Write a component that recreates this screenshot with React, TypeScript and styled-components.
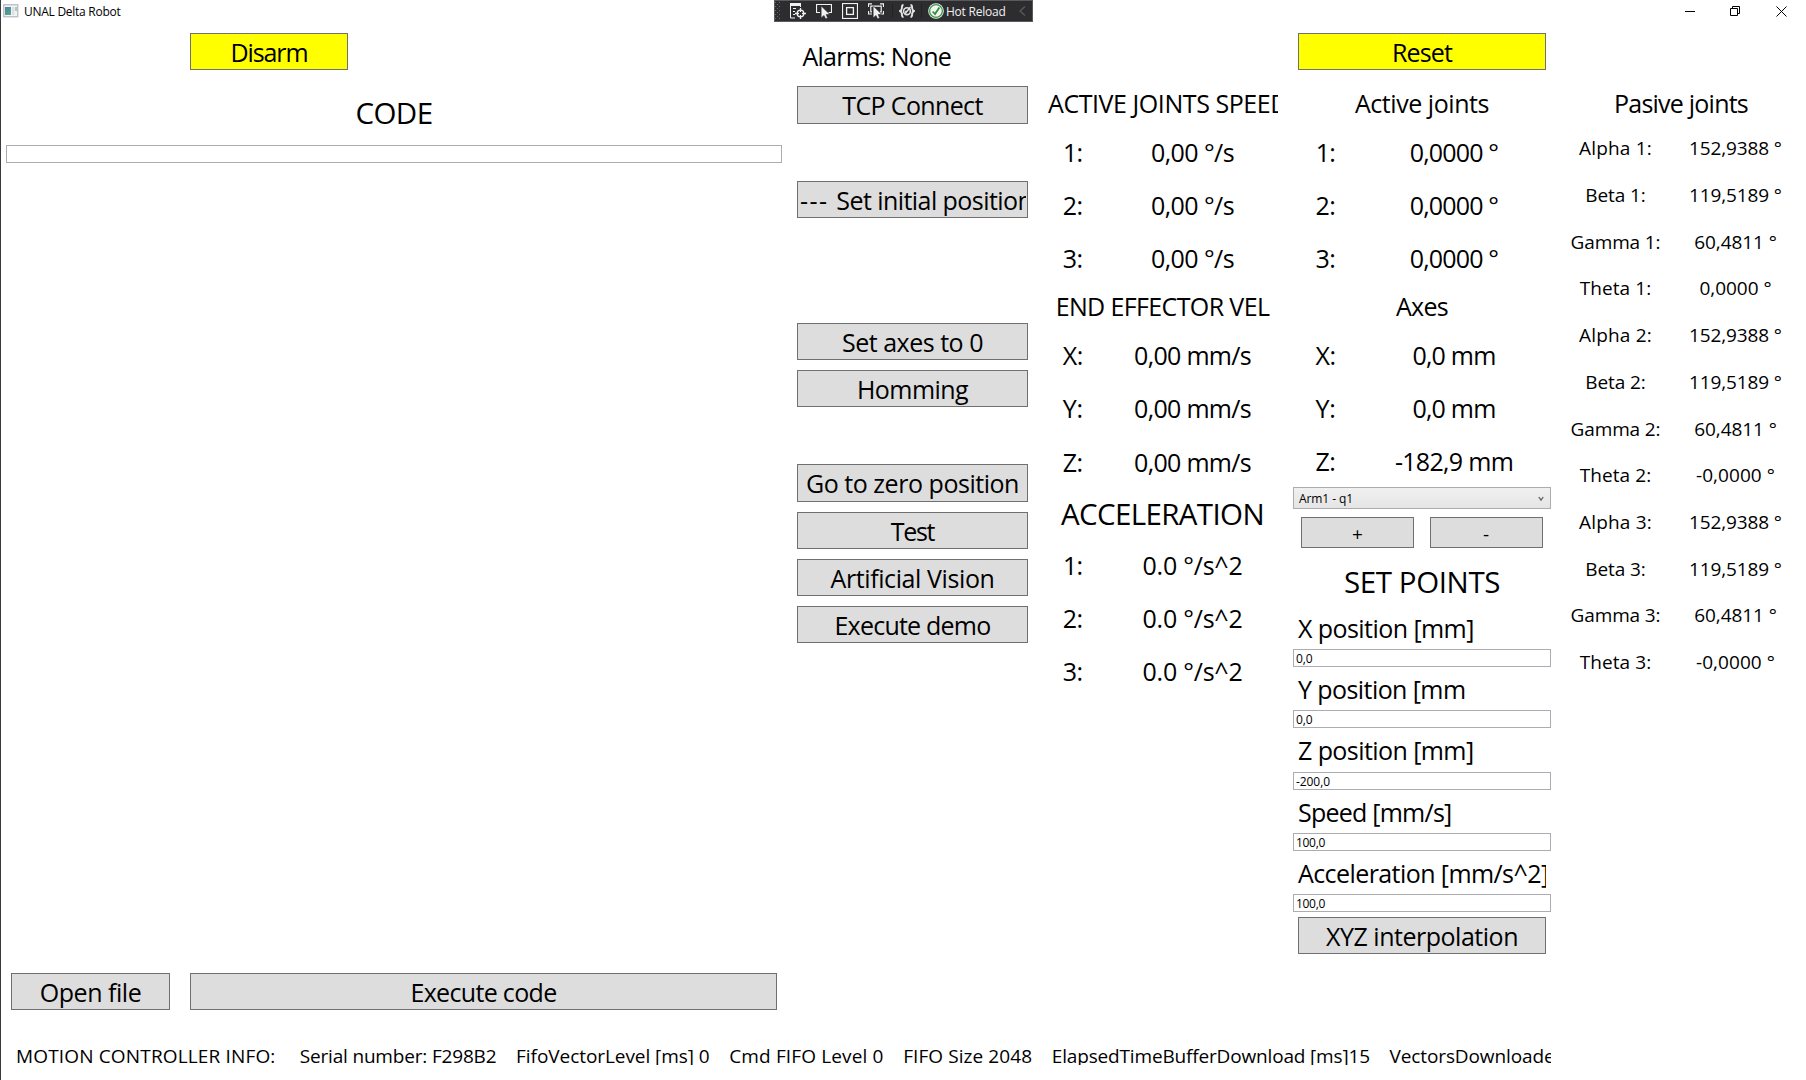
import React, { useLayoutEffect, useRef, useState } from 'react';
import styled, { createGlobalStyle } from 'styled-components';

const GlobalStyle = createGlobalStyle`
  * { box-sizing: border-box; }
  html, body { margin: 0; padding: 0; overflow: hidden; background: #fff; }
  body {
    font-family: "Open Sans", "Noto Sans", sans-serif;
    font-size: 25px;
    color: #000;
  }
`;

/* ---------- text fitted to a given width by tracking ---------- */

const FitSpan = styled.span`
  display: block;
  flex: none;
  white-space: pre;
  font-kerning: none;
  font-variant-ligatures: none;
`;

function Fit({ text, w }: { text: string; w: number }) {
  const ref = useRef<HTMLSpanElement>(null);
  const [tracking, setTracking] = useState(0);
  useLayoutEffect(() => {
    const el = ref.current;
    if (!el) return;
    el.style.letterSpacing = '0px';
    const range = document.createRange();
    range.selectNodeContents(el);
    const natural = range.getBoundingClientRect().width;
    const next = (w + 2 - natural) / text.length;
    el.style.letterSpacing = `${next}px`;
    setTracking(next);
  }, [text, w]);
  return (
    <FitSpan ref={ref} style={{ letterSpacing: `${tracking}px` }}>
      {text}
    </FitSpan>
  );
}

/* ---------- window frame ---------- */

const Window = styled.div`
  position: relative;
  display: flex;
  flex-direction: column;
  width: 1806px;
  height: 1080px;
  border-left: 1px solid #3a3a3c;
  background: #fff;
  overflow: hidden;
`;

const TitleBar = styled.header`
  display: flex;
  align-items: center;
  height: 22px;
  padding: 0 19px 0 2px;
  font-size: 12px;
  line-height: 20px;
`;

const TitleText = styled.div`
  flex: 1;
  padding: 2px 0 0 5px;
`;

const WindowButtons = styled.div`
  display: flex;
  gap: 35px;
  svg { display: block; width: 11px; height: 11px; }
`;

const DebugToolbar = styled.div`
  position: absolute;
  top: 0;
  left: 773px;
  width: 259px;
  height: 22px;
  display: flex;
  align-items: center;
  background: #2d2d30;
  border: 1px solid #5a5a5e;
  color: #f1f1f1;
  font-size: 12px;
  line-height: 18px;
  svg { display: block; flex: none; }
`;

const ToolIcons = styled.div`
  display: flex;
  gap: 10px;
  margin-left: 9px;
`;

const ToolSeparator = styled.i<{ $before: number; $after: number }>`
  width: 1px;
  height: 14px;
  margin: 0 ${p => p.$after}px 0 ${p => p.$before}px;
  background: #222224;
`;

const ToolText = styled.div`
  width: 75px;
  padding: 2px 0 0 2px;
`;

/* ---------- body columns ---------- */

const Body = styled.main`
  display: grid;
  grid-template-columns: 791px 241px 259px 259px 255px;
  height: 993px;
`;

const Column = styled.section`
  display: flex;
  flex-direction: column;
  min-width: 0;
`;

const CodeColumn = styled(Column)`
  padding: 0 10px 0 5px;
`;

const ButtonColumn = styled(Column)`
  padding: 0 5px;
`;

const TopSlot = styled.div<{ $left: number; $right: number }>`
  height: 58.5px;
  padding: 11px ${p => p.$right}px 0 ${p => p.$left}px;
`;

const Button = styled.button<{ $yellow?: boolean; $h?: number; $size?: number; $pt?: number }>`
  display: flex;
  align-items: center;
  justify-content: center;
  width: 100%;
  height: ${p => p.$h ?? 37.25}px;
  margin: 0;
  padding: ${p => p.$pt ?? 2}px 1px 0;
  border: 1px solid #707070;
  border-radius: 0;
  background: ${p => (p.$yellow ? '#ffff00' : '#dddddd')};
  color: #000;
  font-family: inherit;
  font-size: ${p => p.$size ?? 25}px;
  line-height: 33px;
  overflow: hidden;
`;

const ButtonClip = styled.span`
  display: flex;
  width: 100%;
  padding-left: 1px;
  overflow: hidden;
`;

const Heading = styled.h2<{ $h: number; $size?: number; $pt?: number; $shift?: number }>`
  display: flex;
  align-items: center;
  justify-content: center;
  height: ${p => p.$h}px;
  margin: 0;
  padding-top: ${p => p.$pt ?? 0}px;
  padding-left: ${p => p.$shift ?? 0}px;
  font-size: ${p => p.$size ?? 25}px;
  font-weight: 400;
  line-height: 1.36;
`;

const ClippedHeading = styled(Heading)`
  justify-content: flex-start;
  margin: 0 14px 0 12px;
  padding-left: 3px;
  overflow: hidden;
`;

const TextBox = styled.div`
  flex: none;
  height: 18px;
  padding: 1px 0 0 2px;
  border: 1px solid #abadb3;
  font-size: 12px;
  line-height: 16px;
`;

const Spacer = styled.div`
  flex: 1;
`;

const FileActions = styled.div`
  display: grid;
  grid-template-columns: 159px 587px;
  column-gap: 20px;
  padding: 0 0 5px 5px;
`;

const Alarms = styled.div`
  display: flex;
  align-items: center;
  height: 59.3px;
  padding: 8px 0 0 5.5px;
`;

const CommandSlot = styled.div`
  height: 47.25px;
  padding: 5px 0;
`;

const Row = styled.div<{ $h: number; $cols: string; $size?: number; $pt?: number }>`
  display: grid;
  grid-template-columns: ${p => p.$cols};
  align-items: center;
  justify-items: center;
  height: ${p => p.$h}px;
  padding-top: ${p => p.$pt ?? 0}px;
  font-size: ${p => p.$size ?? 25}px;
  line-height: 1.36;
`;

const Combo = styled.div`
  display: flex;
  align-items: center;
  justify-content: space-between;
  height: 22px;
  margin-left: 1px;
  padding: 1px 6px 0 5px;
  border: 1px solid #acacac;
  background: linear-gradient(#f0f0f0, #e5e5e5);
  font-size: 12px;
  line-height: 19px;
`;

const JogButtons = styled.div`
  display: grid;
  grid-template-columns: 113px 113px;
  column-gap: 16px;
  padding: 8px 0 0 9px;
`;

const Field = styled.div`
  height: 61.25px;
  padding-left: 1px;
`;

const FieldLabel = styled.div`
  display: flex;
  align-items: center;
  height: 43.25px;
  margin: 0 5px 0 4px;
  padding: 1px 0 0 1px;
  overflow: hidden;
`;

const Submit = styled.div`
  padding: 5px 5px 0 6px;
`;

const Footer = styled.footer`
  display: flex;
  align-items: center;
  gap: 19.7px;
  width: 1550px;
  height: 50px;
  padding: 32px 0 0 15px;
  font-size: 19px;
  line-height: 25px;
  overflow: hidden;
`;

const FooterLead = styled.div`
  margin-right: 4.5px;
`;

/* ---------- data ---------- */

type Command = { parts: [string, number][]; clip?: boolean } | null;

const commands: Command[] = [
  { parts: [['TCP Connect', 138.5]] },
  null,
  { parts: [['--- ', 34.3], ['Set initial position', 194]], clip: true },
  null,
  null,
  { parts: [['Set axes to 0', 139]] },
  { parts: [['Homming', 109]] },
  null,
  { parts: [['Go to zero position', 211]] },
  { parts: [['Test', 41.5]] },
  { parts: [['Artificial Vision', 162]] },
  { parts: [['Execute demo', 154]] },
];

const fields = [
  { label: 'X position [mm]', w: 173.8, value: '0,0', vw: 14.5 },
  { label: 'Y position [mm', w: 165.5, value: '0,0', vw: 14.5 },
  { label: 'Z position [mm]', w: 173.5, value: '-200,0', vw: 32 },
  { label: 'Speed [mm/s]', w: 151.5, value: '100,0', vw: 27 },
  { label: 'Acceleration [mm/s^2]', w: 248.5, value: '100,0', vw: 27 },
];

const angles = [
  { name: 'Alpha', w: 70.8, values: ['152,9388 °', '152,9388 °', '152,9388 °'], vw: [90.8, 90.8, 90.8] },
  { name: 'Beta', w: 58.6, values: ['119,5189 °', '119,5189 °', '119,5189 °'], vw: [90.8, 90.8, 90.8] },
  { name: 'Gamma', w: 87.8, values: ['60,4811 °', '60,4811 °', '60,4811 °'], vw: [80.5, 80.5, 80.5] },
  { name: 'Theta', w: 69.4, values: ['0,0000 °', '-0,0000 °', '-0,0000 °'], vw: [70.2, 77, 77] },
];

const passive = [0, 1, 2].flatMap(i =>
  angles.map(a => ({ label: `${a.name} ${i + 1}:`, w: a.w, value: a.values[i], vw: a.vw[i] })),
);

const info = [
  { text: 'Serial number: F298B2', w: 194.7 },
  { text: 'FifoVectorLevel [ms] 0', w: 191.5 },
  { text: 'Cmd FIFO Level 0', w: 152.2 },
  { text: 'FIFO Size 2048', w: 127 },
  { text: 'ElapsedTimeBufferDownload [ms]15', w: 316 },
  { text: 'VectorsDownloade', w: 163 },
];

const SPEED_COLS = '79.5px 160px';
const AXIS_COLS = '67px 190px';
const PASSIVE_COLS = '129px 111px';

function Values({ names, values, w, h, cols, pt }: {
  names: string[]; values: string[]; w: number[]; h: number; cols: string; pt: number;
}) {
  return (
    <>
      {names.map((n, i) => (
        <Row key={n} $h={h} $cols={cols} $pt={pt}>
          <Fit text={`${n}:`} w={n === '1' ? 17.5 : 18} />
          <Fit text={values[i]} w={w[i]} />
        </Row>
      ))}
    </>
  );
}

/* ---------- icons ---------- */

const AppIcon = () => (
  <svg width="16" height="14" viewBox="0 0 16 14">
    <defs>
      <linearGradient id="pane" x1="0" y1="0" x2="0.6" y2="1">
        <stop offset="0" stopColor="#4a7fae" />
        <stop offset="1" stopColor="#58a583" />
      </linearGradient>
    </defs>
    <rect x="0.75" y="0.75" width="14" height="12" fill="#f4f4f6" stroke="#b9bcc2" strokeWidth="1.3" />
    <rect x="2" y="3" width="6" height="8" fill="url(#pane)" />
    <rect x="9" y="3" width="2.4" height="8" fill="#dcdfe2" />
    <rect x="12" y="3" width="2" height="4" fill="#a7cdbb" />
  </svg>
);

const Grip = () => (
  <svg width="6" height="18" viewBox="0 0 6 18" fill="#68686c">
    {[0, 4, 8, 12, 16].map(y => (
      <g key={y}>
        <rect x="0" y={y} width="1" height="1" />
        <rect x="4" y={y} width="1" height="1" />
        {y < 16 && <rect x="2" y={y + 2} width="1" height="1" />}
      </g>
    ))}
  </svg>
);

const cursorPath = 'M5.2 3 L5.2 14.8 L8 12.4 L9.6 15.8 L11.6 15 L10.1 11.6 L13.6 11.2 Z';

const LiveTree = () => (
  <svg width="16" height="16" viewBox="0 0 16 16" fill="none" stroke="#f1f1f1">
    <path d="M0.5 1v14H5 M10.5 1v3" />
    <path d="M0 1.5h11" strokeWidth="3" />
    <path d="M3 5.5h3M3 8.5h2M3 11.5h2" />
    <circle cx="10.5" cy="10.5" r="3.3" strokeWidth="1.3" />
    <path d="M10.5 5v4M10.5 12v4M5 10.5h4M12 10.5h4" strokeWidth="1.3" />
  </svg>
);

const SelectElement = () => (
  <svg width="16" height="16" viewBox="0 0 16 16">
    <path d="M4 9.500H0.5v-8h15v8h-3" fill="none" stroke="#f1f1f1" strokeWidth="1.2" />
    <path d={cursorPath} fill="#f1f1f1" stroke="#2d2d30" strokeWidth="0.5" />
  </svg>
);

const Adorners = () => (
  <svg width="16" height="16" viewBox="0 0 16 16" fill="none" stroke="#f1f1f1">
    <rect x="0.5" y="0.5" width="15" height="15" strokeWidth="1.2" />
    <rect x="4.6" y="4.6" width="6.8" height="6.8" strokeWidth="1.3" />
  </svg>
);

const TrackFocus = () => (
  <svg width="16" height="16" viewBox="0 0 16 16">
    <path
      d="M0.5 4V0.8H4 M12 0.8h3.5V4 M0.5 8v3H4 M15.5 8v3H13 M4 8.8H2.8V3.2h10.4v5.6H12"
      fill="none"
      stroke="#f1f1f1"
      strokeWidth="1.2"
    />
    <path d={cursorPath} fill="#f1f1f1" stroke="#2d2d30" strokeWidth="0.5" />
  </svg>
);

const Binding = () => (
  <svg width="16" height="14" viewBox="0 0 16 14" fill="none" stroke="#e4e4e4">
    <path d="M4.5 1C2.5 1 3 3 2.8 4.5 2.7 6 2 6.6 1 7c1 .4 1.7 1 1.8 2.5C3 11 2.5 13 4.5 13" strokeWidth="1.9" />
    <path d="M11.5 1C13.5 1 13 3 13.2 4.5 13.3 6 14 6.6 15 7c-1 .4-1.7 1-1.8 2.5C13 11 13.5 13 11.5 13" strokeWidth="1.9" />
    <circle cx="8" cy="7.2" r="3.4" strokeWidth="1.6" />
    <path d="M6 9.8 11.5 3 M6.4 7l1.4 1.5" strokeWidth="1.4" />
  </svg>
);

const Check = () => (
  <svg width="16" height="16" viewBox="0 0 16 16">
    <circle cx="8" cy="8" r="7.8" fill="#f4f4f4" />
    <circle cx="8" cy="8" r="6.4" fill="none" stroke="#3b9a46" strokeWidth="1.3" />
    <path d="M4.6 8.5 7 11l4.4-6.6" fill="none" stroke="#2f9039" strokeWidth="1.8" />
  </svg>
);

export default function App() {
  return (
    <>
      <GlobalStyle />
      <Window>
        <TitleBar>
          <AppIcon />
          <TitleText><Fit text="UNAL Delta Robot" w={94.5} /></TitleText>
          <WindowButtons>
            <svg viewBox="0 0 11 11"><path d="M1 5.5h10" stroke="#000" /></svg>
            <svg viewBox="0 0 11 11" fill="none" stroke="#000">
              <path d="M0.5 2.5h7v7h-7z M2.5 2.5v-2h7v7h-2" />
            </svg>
            <svg viewBox="0 0 11 11"><path d="M0.5 0.5l10 10M10.5 0.5l-10 10" stroke="#000" /></svg>
          </WindowButtons>
        </TitleBar>

        <Body>
          <CodeColumn>
            <TopSlot $left={184} $right={434}>
              <Button $yellow $h={37}><Fit text="Disarm" w={75} /></Button>
            </TopSlot>
            <Heading $h={64.5} $size={29.5}><Fit text="CODE" w={75} /></Heading>
            <TextBox />
            <Spacer />
            <FileActions>
              <Button $h={37}><Fit text="Open file" w={99.5} /></Button>
              <Button $h={37}><Fit text="Execute code" w={144} /></Button>
            </FileActions>
          </CodeColumn>

          <ButtonColumn>
            <Alarms><Fit text="Alarms: None" w={146.5} /></Alarms>
            {commands.map((c, i) => (
              <CommandSlot key={i}>
                {c && (
                  <Button>
                    {c.clip
                      ? <ButtonClip>{c.parts.map(([t, w]) => <Fit key={t} text={t} w={w} />)}</ButtonClip>
                      : c.parts.map(([t, w]) => <Fit key={t} text={t} w={w} />)}
                  </Button>
                )}
              </CommandSlot>
            ))}
          </ButtonColumn>

          <Column>
            <TopSlot $left={0} $right={0} />
            <ClippedHeading $h={45}><Fit text="ACTIVE JOINTS SPEED" w={238} /></ClippedHeading>
            <Values names={['1', '2', '3']} values={Array(3).fill('0,00 °/s')} w={[81, 81, 81]} h={53} cols={SPEED_COLS} pt={0} />
            <Heading $h={43}><Fit text="END EFFECTOR VEL" w={211.7} /></Heading>
            <Values names={['X', 'Y', 'Z']} values={Array(3).fill('0,00 mm/s')} w={[114.8, 114.8, 114.8]} h={53.3} cols={SPEED_COLS} pt={2} />
            <Heading $h={50.5} $size={29.5} $pt={2}><Fit text="ACCELERATION" w={201} /></Heading>
            <Values names={['1', '2', '3']} values={Array(3).fill('0.0 °/s^2')} w={[98, 98, 98]} h={53.3} cols={SPEED_COLS} pt={0} />
          </Column>

          <Column>
            <TopSlot $left={6} $right={5}>
              <Button $yellow $h={37}><Fit text="Reset" w={58} /></Button>
            </TopSlot>
            <Heading $h={45} $shift={1}><Fit text="Active joints" w={132} /></Heading>
            <Values names={['1', '2', '3']} values={Array(3).fill('0,0000 °')} w={[86.5, 86.5, 86.5]} h={53} cols={AXIS_COLS} pt={0} />
            <Heading $h={43} $shift={1}><Fit text="Axes" w={50} /></Heading>
            <Values names={['X', 'Y', 'Z']} values={['0,0 mm', '0,0 mm', '-182,9 mm']} w={[81.2, 81.2, 116.2]} h={53.2} cols={AXIS_COLS} pt={2} />
            <Combo>
              <Fit text="Arm1 - q1" w={52} />
              <svg width="6" height="6" viewBox="0 0 6 6"><path d="M0.8 1 3 4.2 5.2 1" fill="none" stroke="#606060" strokeWidth="1.3" /></svg>
            </Combo>
            <JogButtons>
              <Button $h={31} $size={19} $pt={4}><Fit text="+" w={9} /></Button>
              <Button $h={31} $size={19} $pt={4}><Fit text="-" w={5} /></Button>
            </JogButtons>
            <Heading $h={57.7} $size={29.5} $pt={11} $shift={1}><Fit text="SET POINTS" w={154} /></Heading>
            {fields.map(f => (
              <Field key={f.label}>
                <FieldLabel><Fit text={f.label} w={f.w} /></FieldLabel>
                <TextBox><Fit text={f.value} w={f.vw} /></TextBox>
              </Field>
            ))}
            <Submit><Button $h={37}><Fit text="XYZ interpolation" w={190} /></Button></Submit>
          </Column>

          <Column>
            <TopSlot $left={0} $right={0} />
            <Heading $h={45} $shift={5}><Fit text="Pasive joints" w={132} /></Heading>
            {passive.map(p => (
              <Row key={p.label} $h={46.7} $cols={PASSIVE_COLS} $size={19} $pt={1}>
                <Fit text={p.label} w={p.w} />
                <Fit text={p.value} w={p.vw} />
              </Row>
            ))}
          </Column>
        </Body>

        <Footer>
          <FooterLead><Fit text="MOTION CONTROLLER INFO:" w={257.5} /></FooterLead>
          {info.map(item => <Fit key={item.text} text={item.text} w={item.w} />)}
        </Footer>

        <DebugToolbar>
          <Grip />
          <ToolIcons>
            <LiveTree />
            <SelectElement />
            <Adorners />
            <TrackFocus />
          </ToolIcons>
          <ToolSeparator $before={8} $after={6} />
          <Binding />
          <ToolSeparator $before={6} $after={6} />
          <Check />
          <ToolText><Fit text="Hot Reload" w={57.5} /></ToolText>
          <svg width="7" height="10" viewBox="0 0 7 10"><path d="M6 0.5 1 5l5 4.5" fill="none" stroke="#5c5c60" strokeWidth="1.2" /></svg>
        </DebugToolbar>
      </Window>
    </>
  );
}
